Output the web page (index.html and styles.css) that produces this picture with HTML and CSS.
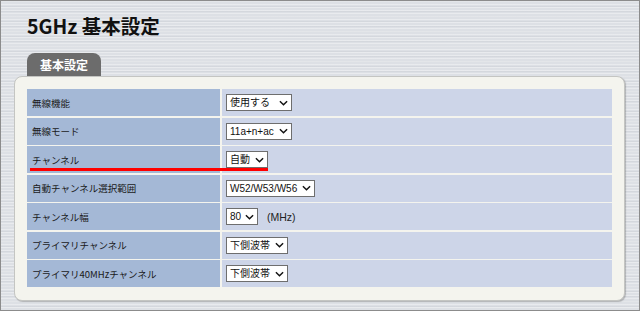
FILE: index.html
```html
<!DOCTYPE html>
<html lang="ja">
<head>
<meta charset="utf-8">
<title>5GHz 基本設定</title>
<link rel="stylesheet" href="styles.css">
</head>
<body>
<div class="page">
  <h1 class="title">5GHz 基本設定</h1>
  <div class="tabs"><div class="tab">基本設定</div></div>
  <div class="panel">
    <div class="grid">
      <div class="label">無線機能</div>
      <div class="value"><div class="select w66"><span>使用する</span><svg class="chev" viewBox="0 0 10 6"><path d="M1 1l4 4 4-4"/></svg></div></div>
      <div class="label">無線モード</div>
      <div class="value"><div class="select w66"><span>11a+n+ac</span><svg class="chev" viewBox="0 0 10 6"><path d="M1 1l4 4 4-4"/></svg></div></div>
      <div class="label">チャンネル</div>
      <div class="value"><div class="select w42"><span>自動</span><svg class="chev" viewBox="0 0 10 6"><path d="M1 1l4 4 4-4"/></svg></div></div>
      <div class="label">自動チャンネル選択範囲</div>
      <div class="value"><div class="select w89"><span>W52/W53/W56</span><svg class="chev" viewBox="0 0 10 6"><path d="M1 1l4 4 4-4"/></svg></div></div>
      <div class="label">チャンネル幅</div>
      <div class="value"><div class="select w32"><span>80</span><svg class="chev" viewBox="0 0 10 6"><path d="M1 1l4 4 4-4"/></svg></div><span class="unit">(MHz)</span></div>
      <div class="label">プライマリチャンネル</div>
      <div class="value"><div class="select w62"><span>下側波帯</span><svg class="chev" viewBox="0 0 10 6"><path d="M1 1l4 4 4-4"/></svg></div></div>
      <div class="label">プライマリ40MHzチャンネル</div>
      <div class="value"><div class="select w62"><span>下側波帯</span><svg class="chev" viewBox="0 0 10 6"><path d="M1 1l4 4 4-4"/></svg></div></div>
    </div>
  </div>
  <div class="marker"></div>
</div>
</body>
</html>
```
FILE: styles.css
```css
* { box-sizing: border-box; }
html, body { margin: 0; padding: 0; }
body {
  width: 640px;
  height: 311px;
  overflow: hidden;
  font-family: "Liberation Sans", "Noto Sans CJK JP", sans-serif;
}
.page {
  position: relative;
  width: 640px;
  height: 311px;
  border: 1px solid #8c8c8c;
  background-color: #dde0e5;
  background-image:
    repeating-linear-gradient(180deg, rgba(255,255,255,0.35) 0px, rgba(255,255,255,0.35) 1px, rgba(255,255,255,0) 1px, rgba(255,255,255,0) 3px),
    repeating-linear-gradient(180deg, rgba(150,155,165,0.12) 0px, rgba(150,155,165,0.12) 1px, rgba(0,0,0,0) 1px, rgba(0,0,0,0) 5px);
}
.title {
  margin: 0;
  padding: 15px 0 0 26px;
  font-family: "Noto Sans CJK JP", sans-serif;
  font-weight: 700;
  font-size: 19.5px;
  line-height: 20px;
  color: #111;
  height: 35px;
}
.tabs {
  margin-top: 17px;
  padding-left: 26px;
  height: 23px;
}
.tab {
  width: 74px;
  height: 23px;
  background: #6c6c6c;
  border-radius: 8px 8px 0 0;
  color: #fff;
  font-family: "Noto Sans CJK JP", sans-serif;
  font-weight: 700;
  font-size: 12px;
  line-height: 24px;
  text-align: center;
}
.panel {
  margin-left: 13px;
  width: 611px;
  height: 225px;
  background: #f4f4ee;
  border: 1px solid #c4c5c2;
  border-radius: 8px;
  box-shadow: 1px 1px 1px rgba(90,90,90,0.35);
  padding: 12px 0 0 12px;
}
.grid {
  display: grid;
  grid-template-columns: 193px 390px;
  grid-auto-rows: 27px;
  column-gap: 2px;
  row-gap: 1.5px;
}
.label {
  background: #a4b8d6;
  color: #1a1a1a;
  font-family: "Noto Sans CJK JP", sans-serif;
  font-size: 9.5px;
  padding-left: 5px;
  display: flex;
  align-items: center;
}
.value {
  background: #cdd5e8;
  display: flex;
  align-items: center;
  padding-left: 4px;
}
.select {
  height: 17px;
  background: #fff;
  border: 1px solid #6e6e6e;
  display: flex;
  align-items: center;
  justify-content: space-between;
  padding: 0 3px 0 3px;
  font-family: "Liberation Sans", "Noto Sans CJK JP", sans-serif;
  font-size: 10px;
  color: #111;
  white-space: nowrap;
}
.select span { line-height: 15px; }
.chev {
  width: 9px;
  height: 6px;
  flex: none;
}
.chev path {
  fill: none;
  stroke: #111;
  stroke-width: 1.6;
}
.w66 { width: 66px; }
.w42 { width: 42px; }
.w89 { width: 89px; }
.w32 { width: 32px; }
.w62 { width: 62px; }
.unit {
  margin-left: 9px;
  font-size: 10.5px;
  color: #222;
}
.marker {
  position: absolute;
  left: 29px;
  top: 166.5px;
  width: 238px;
  height: 3.5px;
  background: #ff0000;
}
```
